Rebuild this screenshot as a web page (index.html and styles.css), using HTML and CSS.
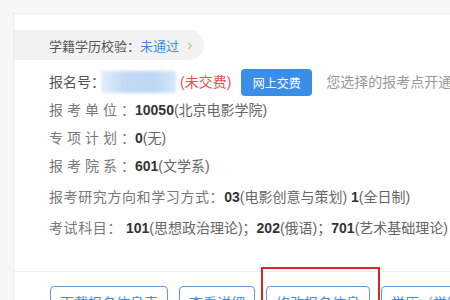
FILE: index.html
```html
<!DOCTYPE html>
<html lang="zh-CN">
<head>
    <meta charset="UTF-8">
    <title>报名信息</title>
    <link rel="stylesheet" href="styles.css">
</head>
<body>
    <div class="card">
        <div class="check-pill">
            <span class="check-label">学籍学历校验：</span>
            <span class="check-status">未通过</span>
            <span class="check-arrow">&#8250;</span>
        </div>

        <div class="info">
            <div class="row row-id">
                <span class="id-label">报名号：</span>
                <span class="id-mask"></span>
                <span class="unpaid">(未交费)</span>
                <button class="pay-btn">网上交费</button>
                <span class="tip">您选择的报考点开通网上确认</span>
            </div>
            <div class="row">
                <span class="label spaced">报考单位</span><span class="colon">：</span><b>10050</b>(北京电影学院)
            </div>
            <div class="row">
                <span class="label spaced">专项计划</span><span class="colon">：</span><b>0</b>(无)
            </div>
            <div class="row">
                <span class="label spaced">报考院系</span><span class="colon">：</span><b>601</b>(文学系)
            </div>
            <div class="row row-wide">
                <span class="label loose">报考研究方向和学习方式：</span><b>03</b>(电影创意与策划) <b>1</b>(全日制)
            </div>
            <div class="row row-wide">
                <span class="label loose">考试科目：</span> <b>101</b>(思想政治理论)；<b>202</b>(俄语)；<b>701</b>(艺术基础理论)
            </div>
        </div>

        <div class="actions">
            <button class="act-btn">下载报名信息表</button>
            <button class="act-btn">查看详细</button>
            <button class="act-btn marked">修改报名信息</button>
            <button class="act-btn">学历（学籍）校验</button>
        </div>
    </div>
</body>
</html>
```

FILE: styles.css
```css
body {
    margin: 0;
    padding: 13px 0 0 13px;
    background-color: #f7f7f7;
    font-family: "Liberation Sans", "Noto Sans CJK SC", sans-serif;
    color: #666;
    overflow: hidden;
}

.card {
    background: #fff;
    border: 1px solid #ececec;
    border-right: none;
    padding-top: 16px;
    width: 600px;
}

/* gray pill at the top of the card */
.check-pill {
    display: inline-flex;
    align-items: center;
    height: 30px;
    width: 190px;
    padding-left: 35px;
    box-sizing: border-box;
    background: #f2f2f2;
    border-radius: 0 15px 15px 0;
    font-size: 13px;
    white-space: nowrap;
}

.check-label {
    color: #555;
}

.check-status {
    color: #3a8ee6;
}

.check-arrow {
    color: #bbb;
    font-size: 16px;
    margin-left: 8px;
}

.info {
    padding: 8px 0 29px 35px;
    font-size: 14px;
}

.row {
    height: 28px;
    line-height: 28px;
    white-space: nowrap;
}

.row b {
    color: #333;
}

.row-wide {
    height: 31px;
    line-height: 34px;
}

.row-id {
    display: flex;
    align-items: center;
}

.id-label {
    color: #555;
}

.id-mask {
    display: inline-block;
    width: 75px;
    height: 22px;
    margin-left: -4px;
    background: linear-gradient(90deg, #e4eefa 0%, #c3daf5 30%, #bcd6f4 70%, #d8e7f8 100%);
    filter: blur(1.5px);
}

.unpaid {
    color: #e8534f;
    margin-left: 4px;
}

.pay-btn {
    margin-left: 10px;
    height: 27px;
    width: 71px;
    border: none;
    border-radius: 4px;
    background: #3a8ee6;
    color: #fff;
    font-family: inherit;
    font-size: 12px;
    padding: 0;
}

.tip {
    margin-left: 14px;
    color: #999;
}

.label {
    color: #777;
}

.spaced {
    letter-spacing: 4px;
}

.loose {
    letter-spacing: 0.6px;
}

.colon {
    color: #777;
}

.actions {
    border-top: 1px solid #eee;
    padding: 14px 0 0 36px;
    display: flex;
    gap: 11px;
    height: 40px;
}

.act-btn {
    height: 32px;
    padding: 0 9px;
    background: #fff;
    border: 1px solid #5a9be0;
    border-radius: 4px;
    color: #3a8ee6;
    font-family: inherit;
    font-size: 14px;
    white-space: nowrap;
    flex-shrink: 0;
}

.marked {
    position: relative;
}

/* red highlight frame drawn over the button */
.marked::after {
    content: "";
    position: absolute;
    left: -6px;
    right: -11px;
    top: -20px;
    bottom: -10px;
    border: 2px solid #e02424;
}
```
